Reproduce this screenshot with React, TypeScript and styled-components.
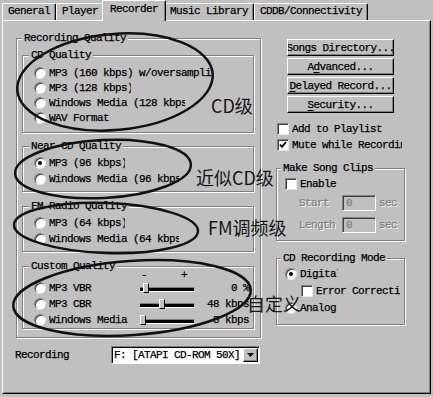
import React from 'react';
import styled, { createGlobalStyle } from 'styled-components';

const GlobalStyle = createGlobalStyle`
  html, body {
    margin: 0;
    padding: 0;
    background: #c0c0c0;
  }
  body {
    font-family: 'Liberation Mono', 'DejaVu Sans Mono', monospace;
    font-size: 11px;
    letter-spacing: -0.6px;
    color: #000;
    -webkit-text-stroke: 0.25px currentColor;
  }
  * {
    box-sizing: border-box;
  }
`;

const TABS = ['General', 'Player', 'Recorder', 'Music Library', 'CDDB/Connectivity'];

const CD_OPTIONS = [
  { text: 'MP3 (160 kbps) w/oversampling', width: 162 },
  { text: 'MP3 (128 kbps)', width: 82 },
  { text: 'Windows Media (128 kbps)', width: 136 },
  { text: 'WAV Format', width: 80 },
];

const CUSTOM_OPTIONS = [
  { text: 'MP3 VBR', value: 0.06, readout: '0 %' },
  { text: 'MP3 CBR', value: 0.4, readout: '48 kbps' },
  { text: 'Windows Media', value: 0, readout: '5 kbps' },
];

const NOTES = [
  { text: 'CD级', x: 211, y: 94 },
  { text: '近似CD级', x: 196, y: 166 },
  { text: 'FM调频级', x: 208, y: 216 },
  { text: '自定义', x: 247, y: 292 },
];

const Radio = ({ checked }: { checked?: boolean }) => <RadioDot $checked={checked} />;

const Check = ({ checked }: { checked?: boolean }) => (
  <CheckBox>
    {checked && (
      <svg width="8" height="8" viewBox="0 0 8 8">
        <path d="M1 3.5 L3 5.8 L7 1" fill="none" stroke="#000" strokeWidth="1.8" />
      </svg>
    )}
  </CheckBox>
);

const Slider = ({ value }: { value: number }) => (
  <Track>
    <Thumb style={{ left: Math.round(value * 48) }} />
  </Track>
);

const App = () => (
  <>
    <GlobalStyle />
    <Window>
      <TabStrip>
        {TABS.map((t) => (
          <Tab key={t} $active={t === 'Recorder'}>
            {t}
          </Tab>
        ))}
      </TabStrip>
      <Panel>
        <LeftColumn>
          <GroupBox $pad="5px 6px 8px 5px">
            <Legend>Recording Quality</Legend>
            <GroupStack>
              <GroupBox $pad="4px 4px 7px 11px">
                <Legend $shift={-5}>CD Quality</Legend>
                {CD_OPTIONS.map((o) => (
                  <OptionRow key={o.text} $h={15}>
                    <Radio />
                    <OptionText $w={o.width}>{o.text}</OptionText>
                  </OptionRow>
                ))}
              </GroupBox>
              <GroupBox $pad="3px 4px 4px 11px">
                <Legend $shift={-5}>Near CD Quality</Legend>
                <OptionRow>
                  <Radio checked />
                  <OptionText $w={76}>MP3 (96 kbps)</OptionText>
                </OptionRow>
                <OptionRow>
                  <Radio />
                  <OptionText $w={130}>Windows Media (96 kbps)</OptionText>
                </OptionRow>
              </GroupBox>
              <GroupBox $pad="3px 4px 4px 11px">
                <Legend $shift={-5}>FM Radio Quality</Legend>
                <OptionRow>
                  <Radio />
                  <OptionText $w={76}>MP3 (64 kbps)</OptionText>
                </OptionRow>
                <OptionRow>
                  <Radio />
                  <OptionText $w={130}>Windows Media (64 kbps)</OptionText>
                </OptionRow>
              </GroupBox>
              <GroupBox $pad="0 4px 0 11px">
                <Legend $shift={-5}>Custom Quality</Legend>
                <SliderScale>
                  <span>-</span>
                  <span>+</span>
                </SliderScale>
                {CUSTOM_OPTIONS.map((o) => (
                  <OptionRow key={o.text}>
                    <Radio />
                    <OptionText $w={88}>{o.text}</OptionText>
                    <Slider value={o.value} />
                    <Readout>{o.readout}</Readout>
                  </OptionRow>
                ))}
              </GroupBox>
            </GroupStack>
          </GroupBox>
          <DriveRow>
            <DriveLabel>Recording</DriveLabel>
            <Select>
              <SelectText>F: [ATAPI CD-ROM 50X]</SelectText>
              <SelectButton>
                <svg width="7" height="4" viewBox="0 0 7 4">
                  <path d="M0 0 H7 L3.5 4 Z" fill="#000" />
                </svg>
              </SelectButton>
            </Select>
          </DriveRow>
        </LeftColumn>

        <RightColumn>
          <ButtonStack>
            <PushButton>Songs Directory...</PushButton>
            <PushButton>
              A<u>d</u>vanced...
            </PushButton>
            <PushButton>
              <u>D</u>elayed Record...
            </PushButton>
            <PushButton>
              <u>S</u>ecurity...
            </PushButton>
          </ButtonStack>
          <CheckList>
            <OptionRow>
              <Check />
              <OptionText $w={100}>Add to Playlist</OptionText>
            </OptionRow>
            <OptionRow>
              <Check checked />
              <OptionText $w={110}>Mute while Recording</OptionText>
            </OptionRow>
          </CheckList>
          <GroupBox $pad="2px 0 6px 8px" $top={9}>
            <Legend $shift={-4}>Make Song Clips</Legend>
            <OptionRow>
              <Check />
              <OptionText $w={60}>Enable</OptionText>
            </OptionRow>
            <FieldRow $top={2}>
              <FieldLabel>Start</FieldLabel>
              <FieldBox>0</FieldBox>
              <Unit>sec</Unit>
            </FieldRow>
            <FieldRow $top={4}>
              <FieldLabel>Length</FieldLabel>
              <FieldBox>0</FieldBox>
              <Unit>sec</Unit>
            </FieldRow>
          </GroupBox>
          <GroupBox $pad="2px 0 8px 8px" $top={11}>
            <Legend $shift={-4}>CD Recording Mode</Legend>
            <OptionRow>
              <Radio checked />
              <OptionText $w={38}>Digital</OptionText>
            </OptionRow>
            <OptionRow $h={17} $indent={16}>
              <Check />
              <OptionText $w={84}>Error Correction</OptionText>
            </OptionRow>
            <OptionRow $top={1}>
              <Radio />
              <OptionText $w={60}>Analog</OptionText>
            </OptionRow>
          </GroupBox>
        </RightColumn>
      </Panel>

      <Annotations>
        <svg width="433" height="397" viewBox="0 0 433 397">
          <g fill="none" stroke="#111" strokeWidth="2.5">
            <ellipse cx="115" cy="82" rx="98" ry="48" transform="rotate(-5 115 82)" />
            <ellipse cx="103" cy="169" rx="88" ry="29" transform="rotate(-3 103 169)" />
            <ellipse cx="106" cy="228" rx="92" ry="25" transform="rotate(2 106 228)" />
            <ellipse cx="132" cy="298" rx="119" ry="37" transform="rotate(-4 132 298)" />
          </g>
        </svg>
        {NOTES.map((n) => (
          <Note key={n.text} $x={n.x} $y={n.y}>
            {n.text}
          </Note>
        ))}
      </Annotations>
    </Window>
  </>
);

const Window = styled.div`
  position: relative;
  width: 433px;
  height: 397px;
  padding: 0 2px;
  overflow: hidden;
  background: #c0c0c0;
`;

const TabStrip = styled.div`
  display: flex;
  align-items: flex-end;
  height: 20px;
  position: relative;
  z-index: 1;
`;

const Tab = styled.div<{ $active?: boolean }>`
  height: ${({ $active }) => ($active ? 21 : 17)}px;
  margin: ${({ $active }) => ($active ? '0 -2px -1px -2px' : '0')};
  padding: ${({ $active }) => ($active ? '0 7px 3px' : '0 5px')};
  line-height: ${({ $active }) => ($active ? 17 : 15)}px;
  white-space: nowrap;
  background: #c0c0c0;
  border-top: 1px solid #fff;
  border-left: 1px solid #fff;
  border-right: 1px solid #000;
  border-radius: 2px 2px 0 0;
  box-shadow: inset -1px 0 0 #808080;
  position: relative;
  z-index: ${({ $active }) => ($active ? 2 : 0)};
`;

const Panel = styled.div`
  display: flex;
  gap: 15px;
  height: 374px;
  padding: 11px 0 0 13px;
  border-top: 1px solid #fff;
  border-left: 1px solid #fff;
  border-right: 1px solid #000;
  border-bottom: 1px solid #000;
  box-shadow: inset -1px -1px 0 #808080;
`;

const LeftColumn = styled.div`
  display: flex;
  flex-direction: column;
  width: 245px;
`;

const RightColumn = styled.div`
  display: flex;
  flex-direction: column;
  width: 129px;
  padding-top: 7px;
`;

const GroupBox = styled.fieldset<{ $pad: string; $top?: number }>`
  margin: ${({ $top }) => $top ?? 0}px 0 0 0;
  min-width: 0;
  padding: ${({ $pad }) => $pad};
  border: 1px solid #808080;
  box-shadow: 1px 1px 0 #fff, inset 1px 1px 0 #fff;
`;

const Legend = styled.legend<{ $shift?: number }>`
  margin-left: ${({ $shift }) => $shift ?? 0}px;
  padding: 0 2px;
  line-height: 12px;
  height: 12px;
  background: #c0c0c0;
  position: relative;
  white-space: nowrap;
`;

const GroupStack = styled.div`
  display: flex;
  flex-direction: column;
  gap: 7px;

  & > fieldset + fieldset + fieldset,
  & > fieldset + fieldset + fieldset + fieldset {
    margin-top: 1px;
  }
`;

const OptionRow = styled.div<{ $h?: number; $indent?: number; $top?: number }>`
  display: flex;
  align-items: center;
  gap: 3px;
  height: ${({ $h }) => $h ?? 16}px;
  margin-top: ${({ $top }) => $top ?? 0}px;
  padding-left: ${({ $indent }) => $indent ?? 0}px;
  white-space: nowrap;
`;

const OptionText = styled.span<{ $w: number }>`
  display: block;
  width: ${({ $w }) => $w}px;
  overflow: hidden;
  line-height: 14px;
  flex: none;
`;

const RadioDot = styled.span<{ $checked?: boolean }>`
  display: flex;
  align-items: center;
  justify-content: center;
  flex: none;
  width: 12px;
  height: 12px;
  border-radius: 50%;
  background: #fff;
  border: 1px solid;
  border-color: #808080 #e8e8e8 #e8e8e8 #808080;
  box-shadow: inset 1px 1px 0 #404040;

  &::after {
    content: '';
    display: ${({ $checked }) => ($checked ? 'block' : 'none')};
    width: 4px;
    height: 4px;
    border-radius: 50%;
    background: #000;
  }
`;

const CheckBox = styled.span`
  display: flex;
  align-items: center;
  justify-content: center;
  flex: none;
  width: 12px;
  height: 12px;
  background: #fff;
  border: 1px solid;
  border-color: #808080 #e8e8e8 #e8e8e8 #808080;
  box-shadow: inset 1px 1px 0 #404040;
`;

const SliderScale = styled.div`
  display: flex;
  justify-content: space-between;
  width: 54px;
  height: 10px;
  margin: -2px 0 0 103px;
  padding: 0 4px;
  line-height: 10px;
`;

const Track = styled.div`
  position: relative;
  flex: none;
  width: 54px;
  height: 16px;

  &::before {
    content: '';
    position: absolute;
    left: 0;
    right: 0;
    top: 7px;
    height: 3px;
    background: #000;
    border-top: 1px solid #808080;
    border-bottom: 1px solid #fff;
  }
`;

const Thumb = styled.span`
  position: absolute;
  top: 3px;
  width: 6px;
  height: 10px;
  background: #c0c0c0;
  border: 1px solid;
  border-color: #fff #000 #000 #fff;
`;

const Readout = styled.span`
  margin-left: auto;
  text-align: right;
`;

const DriveRow = styled.div`
  display: flex;
  align-items: center;
  height: 18px;
  margin-top: 8px;
`;

const DriveLabel = styled.span`
  width: 96px;
  margin-left: -1px;
`;

const Select = styled.div`
  display: flex;
  align-items: center;
  width: 149px;
  height: 18px;
  background: #fff;
  border: 1px solid;
  border-color: #808080 #fff #fff #808080;
  box-shadow: inset 1px 1px 0 #000;
`;

const SelectText = styled.span`
  flex: 1;
  padding-left: 2px;
  white-space: nowrap;
  overflow: hidden;
`;

const SelectButton = styled.span`
  display: flex;
  align-items: center;
  justify-content: center;
  width: 15px;
  height: 14px;
  margin-right: 1px;
  background: #c0c0c0;
  border: 1px solid;
  border-color: #fff #000 #000 #fff;
  box-shadow: inset -1px -1px 0 #808080;
`;

const ButtonStack = styled.div`
  display: flex;
  flex-direction: column;
  gap: 2px;
  padding-left: 11px;
`;

const PushButton = styled.div`
  display: flex;
  align-items: center;
  justify-content: center;
  width: 107px;
  height: 17px;
  overflow: hidden;
  white-space: nowrap;
  background: #c0c0c0;
  border: 1px solid;
  border-color: #fff #000 #000 #fff;
  box-shadow: inset -1px -1px 0 #808080;

  & u {
    text-decoration-thickness: 1px;
    text-underline-offset: 2px;
  }
`;

const CheckList = styled.div`
  display: flex;
  flex-direction: column;
  margin-top: 8px;
  padding-left: 1px;
`;

const FieldRow = styled.div<{ $top: number }>`
  display: flex;
  align-items: center;
  height: 18px;
  margin-top: ${({ $top }) => $top}px;
  padding-left: 14px;
`;

const FieldLabel = styled.span`
  width: 43px;
  color: #808080;
  text-shadow: 1px 1px 0 #fff;
`;

const FieldBox = styled.span`
  width: 34px;
  height: 16px;
  padding-left: 3px;
  line-height: 14px;
  color: #808080;
  background: #c0c0c0;
  border: 1px solid;
  border-color: #808080 #fff #fff #808080;
  box-shadow: inset 1px 1px 0 #404040;
`;

const Unit = styled.span`
  margin-left: 3px;
  color: #808080;
  text-shadow: 1px 1px 0 #fff;
`;

const Annotations = styled.div`
  position: absolute;
  inset: 0;
  pointer-events: none;
  z-index: 5;

  & > svg {
    position: absolute;
    left: 0;
    top: 0;
  }
`;

const Note = styled.span<{ $x: number; $y: number }>`
  position: absolute;
  left: ${({ $x }) => $x}px;
  top: ${({ $y }) => $y}px;
  font-family: 'Noto Sans CJK SC', 'Noto Sans', sans-serif;
  font-size: 18px;
  line-height: 22px;
  letter-spacing: 0;
  -webkit-text-stroke: 0;
  color: #151515;
  white-space: nowrap;
`;

export default App;
